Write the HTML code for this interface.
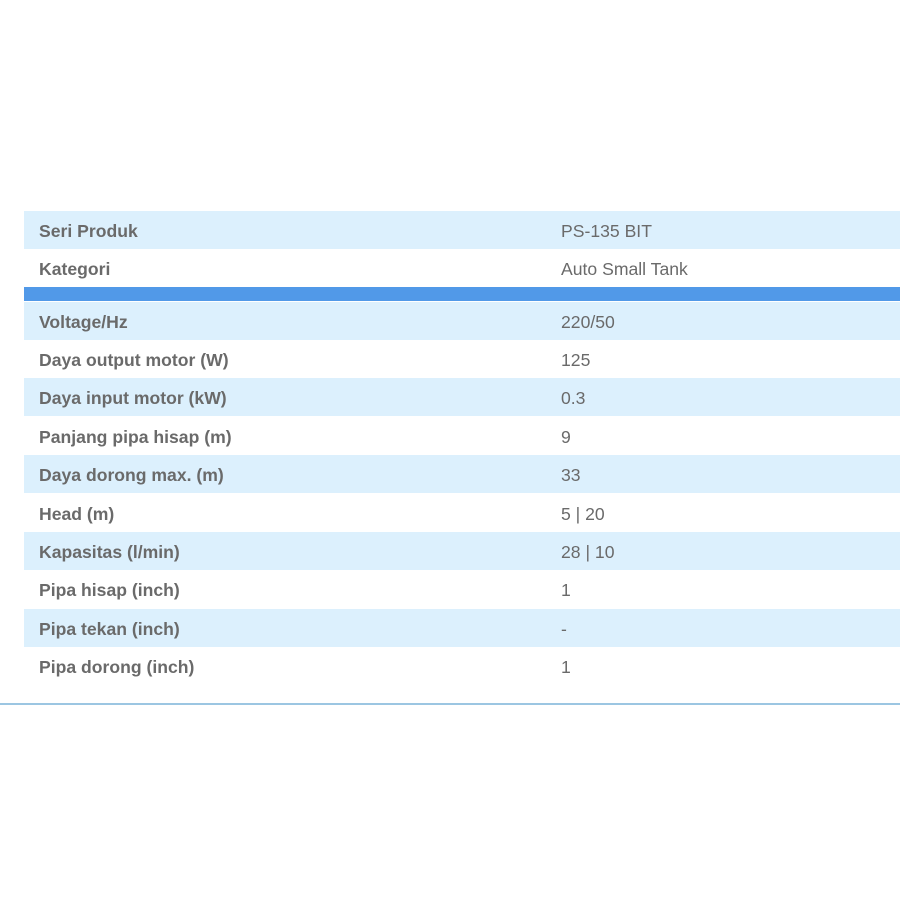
<!DOCTYPE html>
<html><head><style>
body{margin:0;width:900px;height:900px;background:#fff;position:relative;font-family:"Liberation Sans",sans-serif;overflow:hidden}
.r{position:absolute;left:24px;width:876px;height:38px;line-height:40px;font-size:17.6px;color:#6a6a6a}
.r.b{background:#dcf0fd}
.r span.k{position:absolute;left:15px;font-weight:bold}
.r span.v{position:absolute;left:537px}
</style></head><body>
<div class="r b" style="top:211px"><span class="k">Seri Produk</span><span class="v">PS-135 BIT</span></div>
<div class="r" style="top:249px"><span class="k">Kategori</span><span class="v">Auto Small Tank</span></div>
<div style="position:absolute;left:24px;width:876px;top:287px;height:14px;background:#5199e8"></div>
<div class="r b" style="top:302px"><span class="k">Voltage/Hz</span><span class="v">220/50</span></div>
<div class="r" style="top:340px"><span class="k">Daya output motor (W)</span><span class="v">125</span></div>
<div class="r b" style="top:378px"><span class="k">Daya input motor (kW)</span><span class="v">0.3</span></div>
<div class="r" style="top:417px"><span class="k">Panjang pipa hisap (m)</span><span class="v">9</span></div>
<div class="r b" style="top:455px"><span class="k">Daya dorong max. (m)</span><span class="v">33</span></div>
<div class="r" style="top:494px"><span class="k">Head (m)</span><span class="v">5 | 20</span></div>
<div class="r b" style="top:532px"><span class="k">Kapasitas (l/min)</span><span class="v">28 | 10</span></div>
<div class="r" style="top:570px"><span class="k">Pipa hisap (inch)</span><span class="v">1</span></div>
<div class="r b" style="top:609px"><span class="k">Pipa tekan (inch)</span><span class="v">-</span></div>
<div class="r" style="top:647px"><span class="k">Pipa dorong (inch)</span><span class="v">1</span></div>
<div style="position:absolute;left:0;width:900px;top:703px;height:2px;background:#9cc6e2"></div>
</body></html>
